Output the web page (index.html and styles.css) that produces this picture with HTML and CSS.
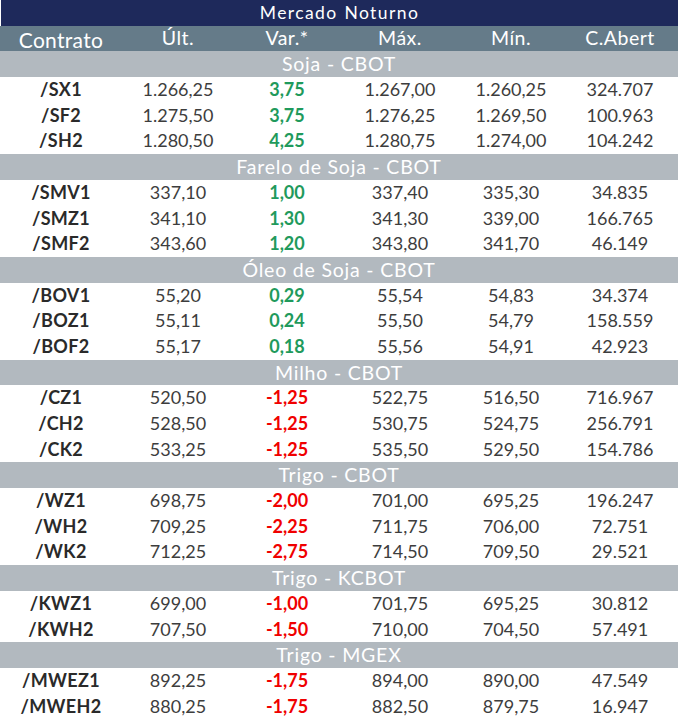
FILE: index.html
```html
<!DOCTYPE html>
<html lang="pt-BR">
<head>
<meta charset="utf-8">
<title>Mercado Noturno</title>
<link rel="stylesheet" href="styles.css">
</head>
<body>
<div class="table">
  <div class="title">Mercado Noturno</div>
  <div class="row head">
    <div class="first">Contrato</div><div>Últ.</div><div>Var.*</div><div>Máx.</div><div>Mín.</div><div>C.Abert</div>
  </div>

  <div class="section">Soja - CBOT</div>
  <div class="row"><div class="code">/SX1</div><div>1.266,25</div><div class="up">3,75</div><div>1.267,00</div><div>1.260,25</div><div>324.707</div></div>
  <div class="row"><div class="code">/SF2</div><div>1.275,50</div><div class="up">3,75</div><div>1.276,25</div><div>1.269,50</div><div>100.963</div></div>
  <div class="row"><div class="code">/SH2</div><div>1.280,50</div><div class="up">4,25</div><div>1.280,75</div><div>1.274,00</div><div>104.242</div></div>

  <div class="section">Farelo de Soja - CBOT</div>
  <div class="row"><div class="code">/SMV1</div><div>337,10</div><div class="up">1,00</div><div>337,40</div><div>335,30</div><div>34.835</div></div>
  <div class="row"><div class="code">/SMZ1</div><div>341,10</div><div class="up">1,30</div><div>341,30</div><div>339,00</div><div>166.765</div></div>
  <div class="row"><div class="code">/SMF2</div><div>343,60</div><div class="up">1,20</div><div>343,80</div><div>341,70</div><div>46.149</div></div>

  <div class="section">Óleo de Soja - CBOT</div>
  <div class="row"><div class="code">/BOV1</div><div>55,20</div><div class="up">0,29</div><div>55,54</div><div>54,83</div><div>34.374</div></div>
  <div class="row"><div class="code">/BOZ1</div><div>55,11</div><div class="up">0,24</div><div>55,50</div><div>54,79</div><div>158.559</div></div>
  <div class="row"><div class="code">/BOF2</div><div>55,17</div><div class="up">0,18</div><div>55,56</div><div>54,91</div><div>42.923</div></div>

  <div class="section">Milho - CBOT</div>
  <div class="row"><div class="code">/CZ1</div><div>520,50</div><div class="down">-1,25</div><div>522,75</div><div>516,50</div><div>716.967</div></div>
  <div class="row"><div class="code">/CH2</div><div>528,50</div><div class="down">-1,25</div><div>530,75</div><div>524,75</div><div>256.791</div></div>
  <div class="row"><div class="code">/CK2</div><div>533,25</div><div class="down">-1,25</div><div>535,50</div><div>529,50</div><div>154.786</div></div>

  <div class="section">Trigo - CBOT</div>
  <div class="row"><div class="code">/WZ1</div><div>698,75</div><div class="down">-2,00</div><div>701,00</div><div>695,25</div><div>196.247</div></div>
  <div class="row"><div class="code">/WH2</div><div>709,25</div><div class="down">-2,25</div><div>711,75</div><div>706,00</div><div>72.751</div></div>
  <div class="row"><div class="code">/WK2</div><div>712,25</div><div class="down">-2,75</div><div>714,50</div><div>709,50</div><div>29.521</div></div>

  <div class="section">Trigo - KCBOT</div>
  <div class="row"><div class="code">/KWZ1</div><div>699,00</div><div class="down">-1,00</div><div>701,75</div><div>695,25</div><div>30.812</div></div>
  <div class="row"><div class="code">/KWH2</div><div>707,50</div><div class="down">-1,50</div><div>710,00</div><div>704,50</div><div>57.491</div></div>

  <div class="section">Trigo - MGEX</div>
  <div class="row"><div class="code">/MWEZ1</div><div>892,25</div><div class="down">-1,75</div><div>894,00</div><div>890,00</div><div>47.549</div></div>
  <div class="row"><div class="code">/MWEH2</div><div>880,25</div><div class="down">-1,75</div><div>882,50</div><div>879,75</div><div>16.947</div></div>
</div>
</body>
</html>
```
FILE: styles.css
```css
html, body {
  margin: 0;
  padding: 0;
  background: #ffffff;
}
body {
  font-family: Lato, "Noto Sans", "DejaVu Sans", sans-serif;
  font-size: 18px;
  color: #3d3d3d;
}
.table {
  width: 678px;
  display: flex;
  flex-direction: column;
}
.title, .section, .row {
  height: 25.7px;
  line-height: 25.7px;
  box-sizing: border-box;
}
.title {
  background: #1e295b;
  color: #ffffff;
  text-align: center;
  font-size: 17.5px;
  letter-spacing: 1.4px;
  word-spacing: 1px;
  margin-left: 1px;
}
.section {
  background: #b2b9bf;
  color: #ffffff;
  text-align: center;
  font-size: 19.5px;
  letter-spacing: 0.8px;
}
.row {
  display: grid;
  grid-template-columns: 122px 112px 106px 120px 102px 116px;
  text-align: center;
  white-space: nowrap;
}
.head {
  background: #657b89;
  color: #ffffff;
  font-size: 19.5px;
  line-height: 24px;
  letter-spacing: 0.5px;
}
.head .first {
  font-size: 21px;
  line-height: 27px;
  letter-spacing: 0.3px;
}
.code {
  color: #2a2a2a;
  font-weight: 700;
  letter-spacing: 0.3px;
}
.up {
  color: #1f9a5c;
  font-weight: 700;
}
.down {
  color: #f00000;
  font-weight: 700;
}
```
